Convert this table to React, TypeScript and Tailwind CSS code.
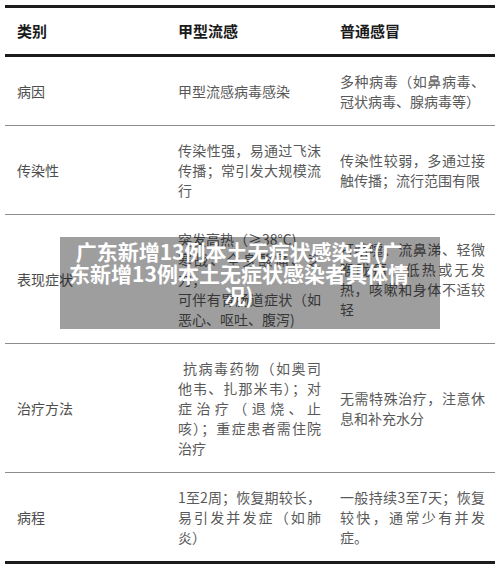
import React from 'react';

type Row = {
  label: string;
  flu: string[];
  cold: string[];
  indent?: boolean;
};

const rows: Row[] = [
  {
    label: '病因',
    flu: ['甲型流感病毒感染'],
    cold: ['多种病毒（如鼻病毒、冠状病毒、腺病毒等）'],
  },
  {
    label: '传染性',
    flu: ['传染性强，易通过飞沫传播；常引发大规模流行'],
    cold: ['传染性较弱，多通过接触传播；流行范围有限'],
  },
  {
    label: '表现症状',
    flu: ['突发高热（≥38°C)', '寒战、全身酸痛、乏力；', '可伴有胃肠道症状（如恶心、呕吐、腹泻)'],
    cold: ['打喷嚏、流鼻涕、轻微喉咙痛；低热或无发热，咳嗽和身体不适较轻'],
  },
  {
    label: '治疗方法',
    flu: ['抗病毒药物（如奥司他韦、扎那米韦）；对症治疗（退烧、止咳）；重症患者需住院治疗'],
    cold: ['无需特殊治疗，注意休息和补充水分'],
    indent: true,
  },
  {
    label: '病程',
    flu: ['1至2周；恢复期较长，易引发并发症（如肺炎）'],
    cold: ['一般持续3至7天；恢复较快，通常少有并发症。'],
  },
];

function App() {
  return (
    <div className="relative h-[566px] w-[500px] overflow-hidden bg-white pt-[5px] font-['Noto_Sans_CJK_SC',sans-serif]">
      <div className="ml-[5px] w-[490px] border-y-[3px] border-[#1c1c1c]">
        {/* header */}
        <div className="grid grid-cols-[161px_162px_167px] border-b-[3px] border-[#1c1c1c] py-[12px] text-[15px] font-bold leading-[22px] text-[#1a1a1a]">
          <div className="pl-[12px]">类别</div>
          <div className="pl-[12px]">甲型流感</div>
          <div className="pl-[12px]">普通感冒</div>
        </div>

        {rows.map((row, i) => (
          <div
            key={row.label}
            className={`grid grid-cols-[161px_162px_167px] py-[14px] text-[14px] leading-[20px] text-[#595959] ${
              i < rows.length - 1 ? 'border-b border-[#8c8c8c]' : ''
            }`}
          >
            <div className="flex items-center pl-[12px] text-[#4d4d4d]">{row.label}</div>
            <div className="flex flex-col justify-center pl-[12px] pr-[7px] text-justify">
              {row.flu.map((t) => (
                <p key={t} className={row.indent ? 'indent-[5px]' : ''}>
                  {t}
                </p>
              ))}
            </div>
            <div className="flex flex-col justify-center pl-[12px] pr-[10px] text-justify">
              {row.cold.map((t) => (
                <p key={t}>{t}</p>
              ))}
            </div>
          </div>
        ))}
      </div>

      {/* title overlay */}
      <div className="absolute left-[60px] top-[237px] h-[92px] w-[380px] bg-[rgba(0,0,0,0.38)] pl-[8px] pr-[30px] pt-[3px]">
        <p className="whitespace-nowrap text-center text-[21px] font-bold leading-[22px] text-white">
          广东新增13例本土无症状感染者(广
          <br />
          东新增13例本土无症状感染者具体情
          <br />
          况)
        </p>
      </div>
    </div>
  );
}

export default App;
